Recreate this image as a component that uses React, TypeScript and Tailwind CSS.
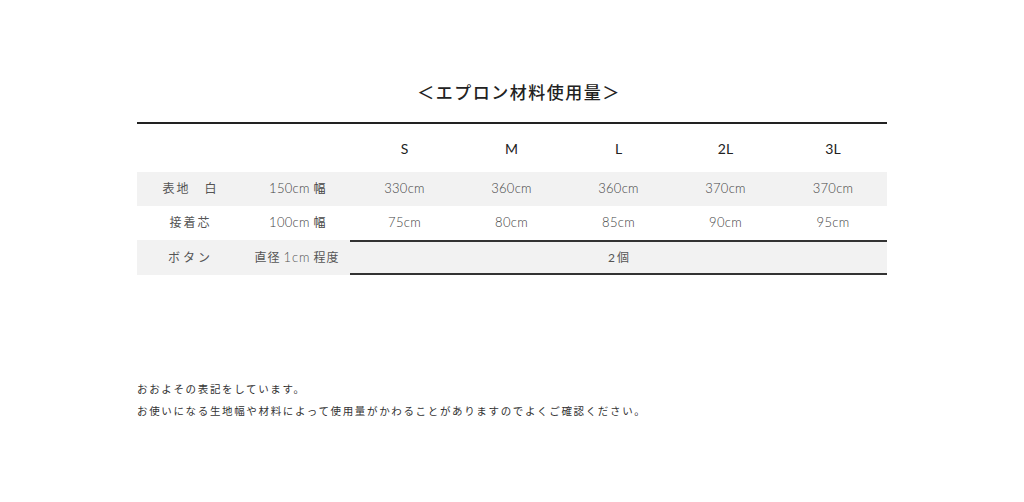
import React from "react";

const font = { fontFamily: '"Lato", "Noto Sans CJK JP", sans-serif' };

const sizes = ["S", "M", "L", "2L", "3L"];
const row1 = ["330cm", "360cm", "360cm", "370cm", "370cm"];
const row2 = ["75cm", "80cm", "85cm", "90cm", "95cm"];

export default function App() {
  return (
    <div className="w-[1024px] h-[502px] bg-white flex flex-col items-center" style={font}>
      <h1 className="mt-[80px] ml-[14px] text-[17px] font-medium text-[#222] tracking-[1.5px] leading-[24px]" style={{ fontFamily: '"Noto Sans CJK JP", sans-serif' }}>
        ＜エプロン材料使用量＞
      </h1>
      <div className="mt-[18px] w-[750px] border-t-2 border-[#222]">
        <div className="grid grid-cols-[107px_107px_107px_107px_107px_107px_108px] h-[48px] items-center text-[14px] font-normal text-[#222]">
          <div />
          <div />
          {sizes.map((s) => (
            <div key={s} className="text-center">{s}</div>
          ))}
        </div>
        <div className="grid grid-cols-[107px_107px_107px_107px_107px_107px_108px] h-[34px] items-center text-[13px] font-light text-[#444] tracking-[0.3px] bg-[#f2f2f2]">
          <div className="text-center text-[12px] font-normal text-[#555] tracking-[2px]">表地　白</div>
          <div className="text-center">150cm <span className="text-[12px] font-normal">幅</span></div>
          {row1.map((v, i) => (
            <div key={i} className="text-center">{v}</div>
          ))}
        </div>
        <div className="grid grid-cols-[107px_107px_107px_107px_107px_107px_108px] h-[34px] items-center text-[13px] font-light text-[#444] tracking-[0.3px]">
          <div className="text-center text-[12px] font-normal text-[#555] tracking-[2px]">接着芯</div>
          <div className="text-center">100cm <span className="text-[12px] font-normal">幅</span></div>
          {row2.map((v, i) => (
            <div key={i} className="text-center">{v}</div>
          ))}
        </div>
        <div className="grid grid-cols-[107px_106px_537px] h-[35px] text-[12px] text-[#555] bg-[#f2f2f2]">
          <div className="flex items-center justify-center tracking-[3px]">ボタン</div>
          <div className="flex items-center justify-center tracking-[1px]">直径 <span className="font-light text-[13px] mx-[3px]">1cm</span> 程度</div>
          <div className="flex items-center justify-center border-y-2 border-[#333] pl-[2px] tracking-[2px]">2個</div>
        </div>
      </div>
      <div className="mt-[103px] w-[750px] text-[10.5px] text-[#333] tracking-[1.65px] leading-[22px]" style={{ fontFamily: '"Noto Sans CJK JP", sans-serif' }}>
        <p>おおよその表記をしています。</p>
        <p>お使いになる生地幅や材料によって使用量がかわることがありますのでよくご確認ください。</p>
      </div>
    </div>
  );
}
